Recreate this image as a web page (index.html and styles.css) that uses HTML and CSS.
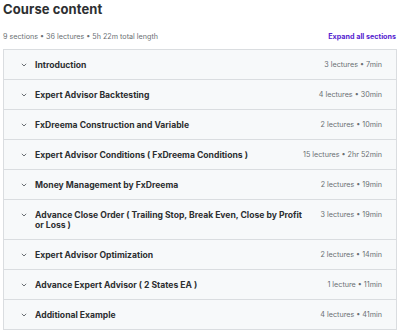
FILE: index.html
```html
<!DOCTYPE html>
<html lang="en">
<head>
    <meta charset="UTF-8">
    <meta name="viewport" content="width=device-width, initial-scale=1.0">
    <title>Course content</title>
    <link rel="stylesheet" href="styles.css">
</head>
<body>
    <div class="course">
        <h2>Course content</h2>
        <div class="summary">
            <span>9 sections • 36 lectures • 5h 22m total length</span>
            <a class="expand" href="#">Expand all sections</a>
        </div>

        <!-- Lista de secciones -->
        <div class="sections">
            <div class="section">
                <span class="chevron"><svg width="6" height="4" viewBox="0 0 6 4"><path d="M0.8 0.8 L3 3 L5.2 0.8" fill="none" stroke="#6a6f73" stroke-width="1"/></svg></span>
                <span class="title">Introduction</span>
                <span class="meta">3 lectures • 7min</span>
            </div>
            <div class="section">
                <span class="chevron"><svg width="6" height="4" viewBox="0 0 6 4"><path d="M0.8 0.8 L3 3 L5.2 0.8" fill="none" stroke="#6a6f73" stroke-width="1"/></svg></span>
                <span class="title">Expert Advisor Backtesting</span>
                <span class="meta">4 lectures • 30min</span>
            </div>
            <div class="section">
                <span class="chevron"><svg width="6" height="4" viewBox="0 0 6 4"><path d="M0.8 0.8 L3 3 L5.2 0.8" fill="none" stroke="#6a6f73" stroke-width="1"/></svg></span>
                <span class="title">FxDreema Construction and Variable</span>
                <span class="meta">2 lectures • 10min</span>
            </div>
            <div class="section">
                <span class="chevron"><svg width="6" height="4" viewBox="0 0 6 4"><path d="M0.8 0.8 L3 3 L5.2 0.8" fill="none" stroke="#6a6f73" stroke-width="1"/></svg></span>
                <span class="title">Expert Advisor Conditions ( FxDreema Conditions )</span>
                <span class="meta">15 lectures • 2hr 52min</span>
            </div>
            <div class="section">
                <span class="chevron"><svg width="6" height="4" viewBox="0 0 6 4"><path d="M0.8 0.8 L3 3 L5.2 0.8" fill="none" stroke="#6a6f73" stroke-width="1"/></svg></span>
                <span class="title">Money Management by FxDreema</span>
                <span class="meta">2 lectures • 19min</span>
            </div>
            <div class="section">
                <span class="chevron"><svg width="6" height="4" viewBox="0 0 6 4"><path d="M0.8 0.8 L3 3 L5.2 0.8" fill="none" stroke="#6a6f73" stroke-width="1"/></svg></span>
                <span class="title">Advance Close Order ( Trailing Stop, Break Even, Close by Profit or Loss )</span>
                <span class="meta">3 lectures • 19min</span>
            </div>
            <div class="section">
                <span class="chevron"><svg width="6" height="4" viewBox="0 0 6 4"><path d="M0.8 0.8 L3 3 L5.2 0.8" fill="none" stroke="#6a6f73" stroke-width="1"/></svg></span>
                <span class="title">Expert Advisor Optimization</span>
                <span class="meta">2 lectures • 14min</span>
            </div>
            <div class="section">
                <span class="chevron"><svg width="6" height="4" viewBox="0 0 6 4"><path d="M0.8 0.8 L3 3 L5.2 0.8" fill="none" stroke="#6a6f73" stroke-width="1"/></svg></span>
                <span class="title">Advance Expert Advisor ( 2 States EA )</span>
                <span class="meta">1 lecture • 11min</span>
            </div>
            <div class="section">
                <span class="chevron"><svg width="6" height="4" viewBox="0 0 6 4"><path d="M0.8 0.8 L3 3 L5.2 0.8" fill="none" stroke="#6a6f73" stroke-width="1"/></svg></span>
                <span class="title">Additional Example</span>
                <span class="meta">4 lectures • 41min</span>
            </div>
        </div>
    </div>
</body>
</html>
```

FILE: styles.css
```css
body {
    font-family: 'Inter', 'Liberation Sans', sans-serif;
    background-color: #fff;
    color: #2d2f31;
    margin: 0;
    padding: 0;
}
.course {
    padding: 0 3px 0 3px;
}
h2 {
    font-size: 13px;
    font-weight: 700;
    margin: 0;
    padding-top: 1px;
    line-height: 17px;
    letter-spacing: 0.1px;
}
.summary {
    display: flex;
    justify-content: space-between;
    align-items: center;
    margin-top: 14px;
    font-size: 7.2px;
    color: #6a6f73;
    line-height: 10px;
}
.expand {
    color: #5624d0;
    font-weight: 700;
    text-decoration: none;
    margin-right: 1px;
}
.sections {
    margin-top: 7px;
    border: 1px solid #dadde0;
    border-top: none;
}
.section {
    display: flex;
    align-items: flex-start;
    background-color: #f7f9fa;
    border-top: 1px solid #dadde0;
    padding: 9.5px 14px 9.5px 17px;
    line-height: 10px;
}
.chevron {
    width: 14px;
    flex-shrink: 0;
    display: flex;
    align-items: center;
    height: 10px;
}
.title {
    flex: 1;
    font-size: 8.6px;
    font-weight: 700;
}
.meta {
    margin-left: 16px;
    font-size: 7.2px;
    color: #6a6f73;
    white-space: nowrap;
}
```
